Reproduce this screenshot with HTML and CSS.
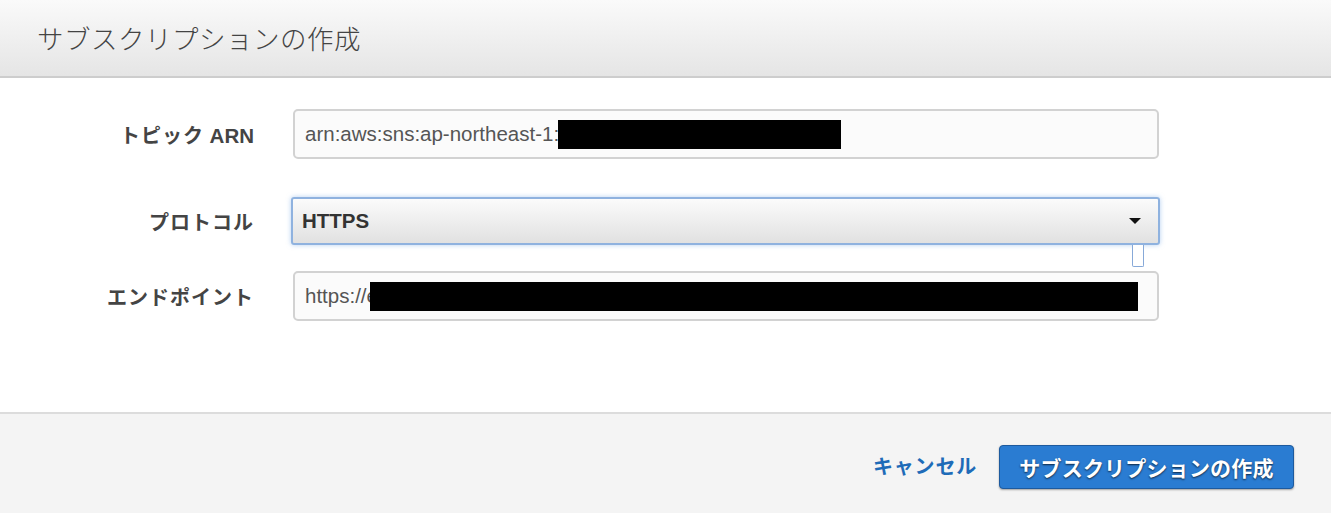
FILE: index.html
```html
<!DOCTYPE html>
<html lang="ja">
<head>
<meta charset="utf-8">
<link rel="stylesheet" href="styles.css">
</head>
<body>
<div class="dialog">
  <div class="header"><h1 class="title">サブスクリプションの作成</h1></div>
  <div class="content">
    <div class="row row-arn">
      <div class="label">トピック <span class="latin">ARN</span></div>
      <div class="field input"><span class="val">arn:aws:sns:ap-northeast-1:</span><span class="redact redact-arn"></span></div>
    </div>
    <div class="row row-proto">
      <div class="label">プロトコル</div>
      <div class="field select"><span class="sel-val">HTTPS</span><span class="caret"></span><span class="tip"></span></div>
    </div>
    <div class="row row-end">
      <div class="label">エンドポイント</div>
      <div class="field input"><span class="val">https://e</span><span class="redact redact-end"></span></div>
    </div>
  </div>
  <div class="footer">
    <a class="cancel">キャンセル</a>
    <button class="primary">サブスクリプションの作成</button>
  </div>
</div>
</body>
</html>
```
FILE: styles.css
```css
html, body { margin: 0; padding: 0; background: #fff; }
body { font-family: "Noto Sans CJK JP", "Liberation Sans", sans-serif; }
.dialog { width: 1331px; height: 513px; display: flex; flex-direction: column; overflow: hidden; }
.header {
  height: 76px; border-bottom: 2px solid #cdcdcd;
  background: linear-gradient(#fafafa, #e5e5e5);
  display: flex; align-items: center; padding-left: 37px;
}
.title { margin: 0; font-size: 26.5px; font-weight: 300; color: #444; letter-spacing: 0.5px; padding-bottom: 2px; }
.content { padding: 31px 0 0 0; flex: 1; }
.row { display: flex; align-items: center; }
.row-proto { margin-top: 38px; }
.row-end { margin-top: 26px; }
.label {
  width: 254px; text-align: right; font-weight: 700; font-size: 20px; color: #444;
  letter-spacing: 1px; margin-right: 39px;
}
.label .latin { font-family: "Liberation Sans", sans-serif; letter-spacing: 0; font-size: 20.5px; }
.field { width: 866px; box-sizing: border-box; position: relative; display: flex; align-items: center; }
.input {
  height: 50px; border: 2px solid #d2d2d2; border-radius: 5px; background: #fbfbfb;
  padding-left: 10px; font-family: "Liberation Sans", sans-serif; font-size: 20.5px; color: #555;
}
.redact { display: block; background: #000; height: 29px; }
.redact-arn { width: 283px; margin-left: -1px; }
.redact-end { width: 768px; margin-left: -8px; }
.select {
  width: 869px; margin-left: -2px;
  height: 48px; border: 2px solid #8fb2df; border-radius: 3px;
  background: linear-gradient(#fbfbfb, #e1e1e1);
  box-shadow: 0 0 5px rgba(120,170,230,0.55);
  padding-left: 9px; font-family: "Liberation Sans", sans-serif; font-weight: 700; font-size: 20.5px; color: #333;
}
.caret {
  position: absolute; right: 17px; top: 19px;
  width: 0; height: 0; border-left: 6px solid transparent; border-right: 6px solid transparent; border-top: 6px solid #111;
}
.tip {
  position: absolute; right: 14px; top: 46px; width: 10px; height: 21px;
  border: 1.5px solid #87a9d8; border-top: none; border-radius: 0 0 2px 2px; background: #fff;
}
.footer {
  height: 101px; border-top: 2px solid #dcdcdc; background: #f4f4f4;
  display: flex; justify-content: flex-end; align-items: flex-start; padding: 31px 37px 0 0; box-sizing: border-box;
}
.cancel { color: #1e6bb8; font-weight: 700; font-size: 20px; margin-right: 22px; margin-top: 6px; cursor: pointer; letter-spacing: 0.8px; }
.primary {
  height: 44px; width: 295px; border: 1px solid #1d5a9e; border-radius: 4px;
  background: #2a7cd2; color: #fff; font-family: "Noto Sans CJK JP", sans-serif; font-weight: 700; font-size: 21px;
  text-shadow: 0 1px 2px rgba(0,0,0,0.7); box-shadow: 0 1px 2px rgba(0,0,0,0.35); letter-spacing: 0.2px; padding: 0;
}
```
